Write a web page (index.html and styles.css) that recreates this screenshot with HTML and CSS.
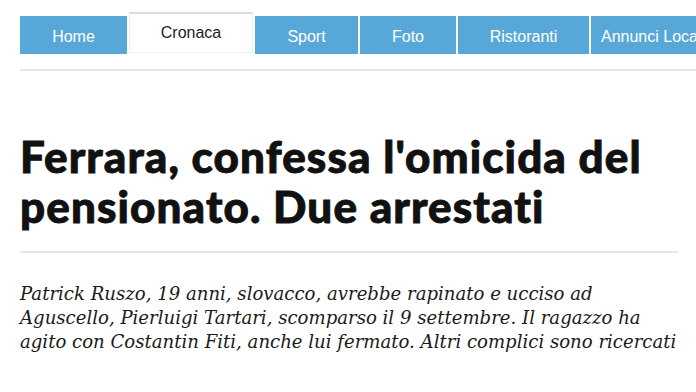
FILE: index.html
```html
<!DOCTYPE html>
<html lang="it">
<head>
<meta charset="utf-8">
<title>Ferrara, confessa l'omicida del pensionato</title>
<link rel="stylesheet" href="styles.css">
</head>
<body>
<div class="page">
  <header class="header">
    <nav class="nav">
      <a class="tab" href="#">Home</a>
      <a class="tab tab-active" href="#">Cronaca</a>
      <a class="tab tab-sport" href="#">Sport</a>
      <a class="tab tab-foto" href="#">Foto</a>
      <a class="tab tab-risto" href="#">Ristoranti</a>
      <a class="tab tab-annunci" href="#">Annunci Locali</a>
    </nav>
    <div class="rule rule-top"></div>
  </header>
  <article class="article">
    <h1 class="title">Ferrara, confessa l'omicida del pensionato. Due arrestati</h1>
    <div class="rule"></div>
    <p class="summary">Patrick Ruszo, 19 anni, slovacco, avrebbe rapinato e ucciso ad Aguscello, Pierluigi Tartari, scomparso il 9 settembre. Il ragazzo ha agito con Costantin Fiti, anche lui fermato. Altri complici sono ricercati</p>
  </article>
</div>
</body>
</html>
```
FILE: styles.css
```css
html, body {
  margin: 0;
  padding: 0;
  background: #fff;
  overflow: hidden;
}
.page {
  padding: 12px 0 0 20px;
}
.header {
  width: 700px;
}
.nav {
  display: flex;
  align-items: flex-end;
  gap: 2px;
  white-space: nowrap;
  height: 42px;
}
.tab {
  flex: none;
  display: flex;
  align-items: center;
  justify-content: center;
  box-sizing: border-box;
  height: 38px;
  width: 107px;
  padding-top: 3px;
  background: #57a8d8;
  color: #fff;
  font-family: "Liberation Sans", Arial, sans-serif;
  font-size: 16px;
  text-decoration: none;
}
.tab-active {
  width: 124px;
  height: 41px;
  margin-bottom: 1px;
  padding-top: 0;
  background: #fff;
  color: #222;
  border-top: 2px solid #dcdcdc;
  border-left: 1px solid #eeeeee;
  border-right: 1px solid #eeeeee;
  border-bottom: 1px solid #f2f2f2;
}
.tab-sport { width: 103px; }
.tab-foto { width: 96px; }
.tab-risto { width: 131px; }
.tab-annunci { width: 140px; justify-content: flex-start; padding-left: 10px; }
.rule {
  height: 2px;
  background: #e6e6e6;
}
.rule-top {
  margin-top: 15px;
}
.article {
  width: 658px;
}
.title {
  margin: 60px 0 20px;
  font-family: Lato, "Noto Sans", sans-serif;
  font-weight: 900;
  font-size: 44px;
  line-height: 50px;
  color: #111;
  letter-spacing: 1.1px;
  -webkit-text-stroke: 0.9px #111;
}
.summary {
  margin: 29px -14px 0 0;
  font-family: "DejaVu Serif", Georgia, serif;
  font-style: italic;
  font-size: 18.1px;
  line-height: 24px;
  color: #1a1a1a;
}
```
